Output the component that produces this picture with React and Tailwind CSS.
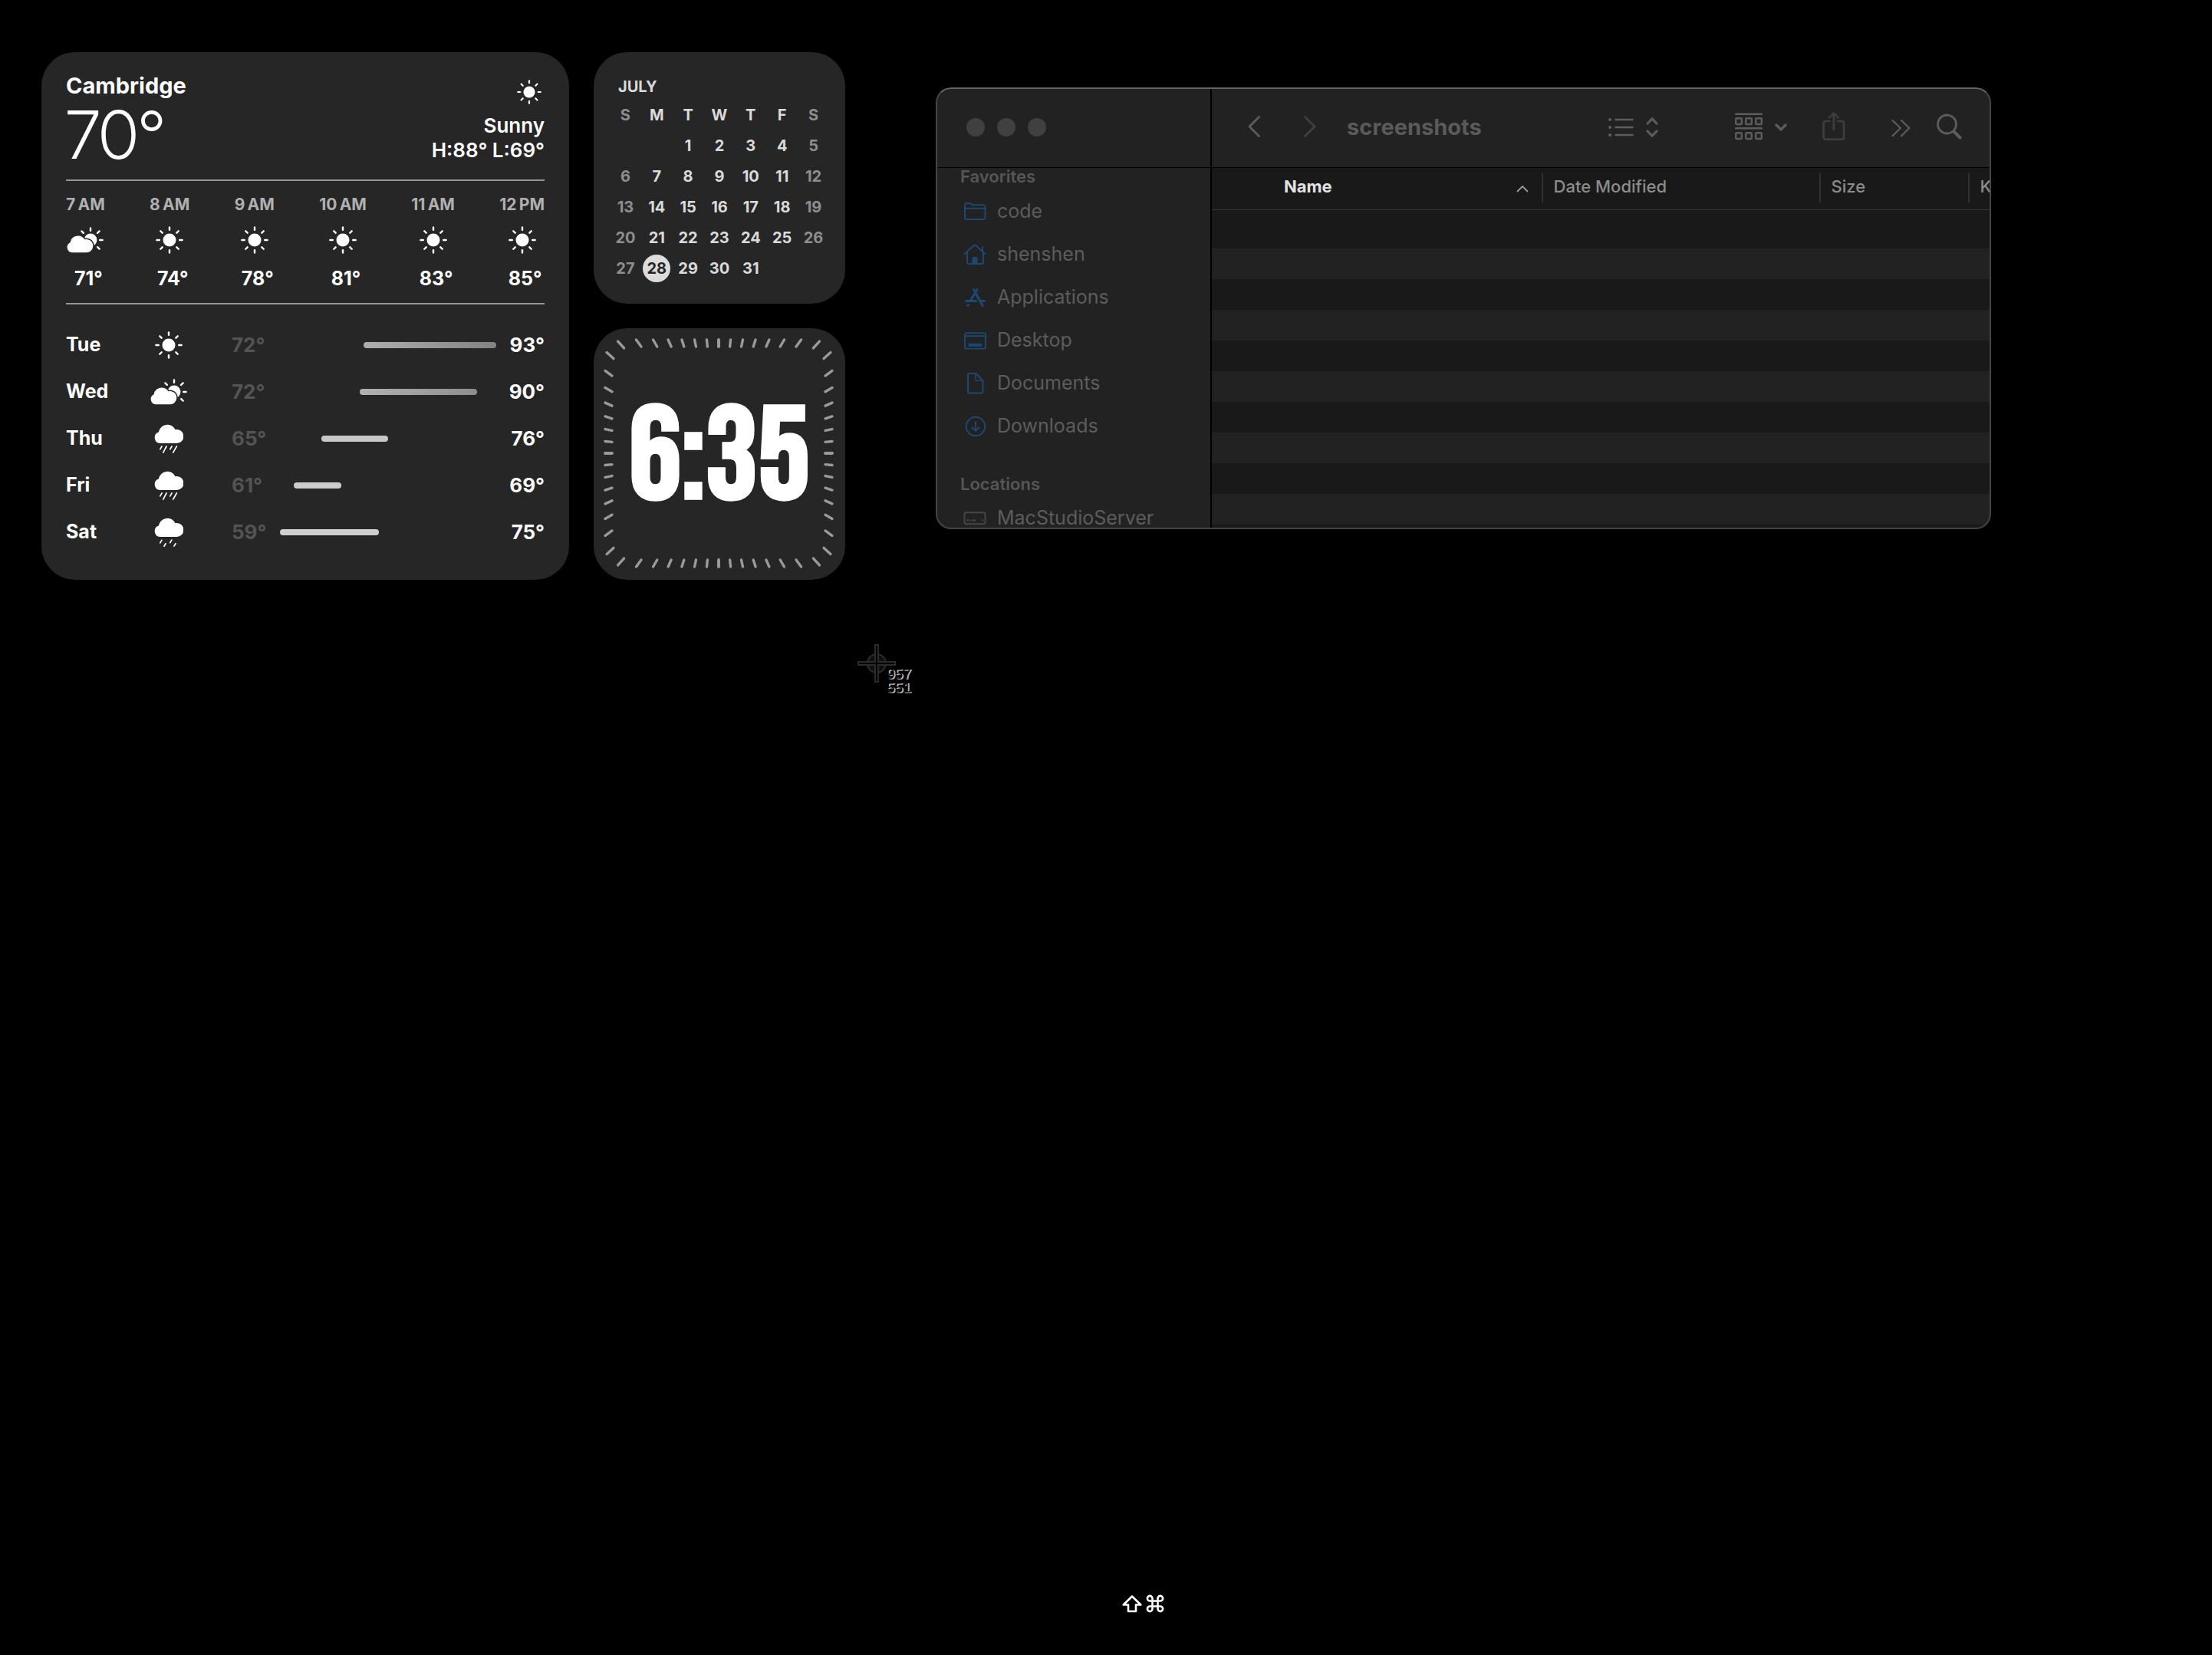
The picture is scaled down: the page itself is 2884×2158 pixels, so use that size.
import React from "react";

/* ---------- weather glyphs ---------- */

function SunIcon({ className = "size-9" }) {
  const rays = [0, 45, 90, 135, 180, 225, 270, 315];
  return (
    <svg viewBox="0 0 36 36" className={className} fill="white" stroke="white" aria-hidden="true">
      <circle cx="18" cy="18" r="8.5" stroke="none" />
      {rays.map((a) => (
        <line key={a} x1="18" y1="1.4" x2="18" y2="4.8" strokeWidth="2.4" strokeLinecap="round" transform={`rotate(${a} 18 18)`} />
      ))}
    </svg>
  );
}

function CloudSunIcon() {
  return (
    <svg viewBox="0 0 48 34" className="h-[34px] w-12" aria-hidden="true">
      <circle cx="31" cy="17" r="8.4" fill="white" />
      <g stroke="white" strokeWidth="2.4" strokeLinecap="round">
        <path d="M31 1.4v3.4M42.6 5.4l-2.6 2.6M46.6 17h-3.4M42.6 28.6l-2.4-2.4M19.4 5.4l2.4 2.4" />
      </g>
      <path
        d="M7 33.3A6.9 6.9 0 0 1 4.6 20.2A10.3 10.3 0 0 1 23.4 16.2A8.7 8.7 0 1 1 25 33.3Z"
        fill="white"
        stroke="#262626"
        strokeWidth="3"
        paintOrder="stroke"
      />
    </svg>
  );
}

function RainIcon({ light = false }) {
  return (
    <svg viewBox="0 0 38 38" className="size-[38px]" aria-hidden="true">
      <path d="M7.6 25A7.4 7.4 0 0 1 5.8 10.6A11.6 11.6 0 0 1 27.6 7.2A9 9 0 1 1 29 25Z" fill="white" />
      <g stroke="white" strokeWidth="1.7" strokeLinecap="round">
        {light ? (
          <path d="M9.8 29.3l-2 3.6M15 33.8l-2 3.4M22.8 29.1l-2 3.6M28 33.8l-2 3.2" />
        ) : (
          <path d="M10 29l-2.2 3.9M16 29l-4.2 8.1M23 29l-2.2 3.9M29.3 29l-4.6 8.1" />
        )}
      </g>
    </svg>
  );
}

/* ---------- weather widget ---------- */

const hours = [
  { time: "7\u2009AM", icon: <CloudSunIcon />, temp: "71°" },
  { time: "8\u2009AM", icon: <SunIcon />, temp: "74°" },
  { time: "9\u2009AM", icon: <SunIcon />, temp: "78°" },
  { time: "10\u2009AM", icon: <SunIcon />, temp: "81°" },
  { time: "11\u2009AM", icon: <SunIcon />, temp: "83°" },
  { time: "12\u2009PM", icon: <SunIcon />, temp: "85°" },
];

const days = [
  { day: "Tue", icon: <SunIcon />, low: "72°", high: "93°", start: 38.7, span: 61.3, tone: "bg-linear-to-r from-[#aeaeac] to-[#828282]" },
  { day: "Wed", icon: <CloudSunIcon />, low: "72°", high: "90°", start: 36.9, span: 54.3, tone: "bg-linear-to-r from-[#b2b2b2] to-[#8e8e8e]" },
  { day: "Thu", icon: <RainIcon />, low: "65°", high: "76°", start: 19.1, span: 30.9, tone: "bg-[#c8c8c8]" },
  { day: "Fri", icon: <RainIcon />, low: "61°", high: "69°", start: 6.4, span: 22, tone: "bg-[#cccccc]" },
  { day: "Sat", icon: <RainIcon light />, low: "59°", high: "75°", start: 0, span: 45.7, tone: "bg-[#cfcfcf]" },
];

function Weather() {
  return (
    <section className="w-[688px] rounded-[44px] bg-[#262626] px-8 pt-[26px] pb-8 text-white">
      <div className="flex justify-between">
        <div>
          <h2 className="text-[29px] leading-9 font-bold">Cambridge</h2>
          <p className="font-['Inter_Display','Inter',sans-serif] text-[86px] leading-[92px] font-[350]">70°</p>
        </div>
        <div className="flex flex-col items-end pt-2.5 text-[26px] leading-8 font-semibold">
          <SunIcon className="mr-1 mb-3 size-8" />
          <p>Sunny</p>
          <p>H:88° L:69°</p>
        </div>
      </div>
      <ul className="mt-3 flex justify-between border-y-2 border-[#969696] py-4">
        {hours.map((h) => (
          <li key={h.time} className="flex flex-col items-center">
            <span className="text-[21px] leading-[30px] font-bold text-[#b0b0b0]">{h.time}</span>
            <span className="mt-[13px] mb-4 flex h-9 items-center">{h.icon}</span>
            <span className="pl-2 text-[25px] leading-8 font-bold">{h.temp}</span>
          </li>
        ))}
      </ul>
      <ul className="pt-[22px] text-[26px] font-bold">
        {days.map((d) => (
          <li key={d.day} className="grid h-[61px] grid-cols-[109px_50px_57px_63px_1fr_63px] items-center">
            <span className="text-[25px]">{d.day}</span>
            <span className="flex justify-center">{d.icon}</span>
            <span />
            <span className="text-[#545454]">{d.low}</span>
            <span className="flex">
              <span className={`h-2 rounded-full ${d.tone}`} style={{ marginLeft: `${d.start}%`, width: `${d.span}%` }} />
            </span>
            <span className="text-right">{d.high}</span>
          </li>
        ))}
      </ul>
    </section>
  );
}

/* ---------- calendar widget ---------- */

const weekdays = ["S", "M", "T", "W", "T", "F", "S"];
const weeks = [
  ["", "", 1, 2, 3, 4, 5],
  [6, 7, 8, 9, 10, 11, 12],
  [13, 14, 15, 16, 17, 18, 19],
  [20, 21, 22, 23, 24, 25, 26],
  [27, 28, 29, 30, 31, "", ""],
];
const weekend = (i) => (i === 0 || i === 6 ? "text-[#8e8e8e]" : "text-[#dadada]");

function Calendar() {
  return (
    <section className="h-[328px] w-[328px] rounded-[44px] bg-[#262626] px-[21px] pt-7 text-[20px] text-[#dadada]">
      <h2 className="pl-[11px] leading-[34px] font-bold">JULY</h2>
      <table className="w-full table-fixed text-center">
        <thead>
          <tr className="h-10">
            {weekdays.map((d, i) => (
              <th key={i} className={`p-0 font-bold ${weekend(i)}`}>{d}</th>
            ))}
          </tr>
        </thead>
        <tbody>
          {weeks.map((w, r) => (
            <tr key={r} className="h-10">
              {w.map((d, i) => (
                <td key={i} className={`p-0 font-bold ${weekend(i)}`}>
                  {d === 28 ? (
                    <span className="mx-auto flex size-9 items-center justify-center rounded-full bg-[#dcdcdc] text-[#262626]">28</span>
                  ) : (
                    d
                  )}
                </td>
              ))}
            </tr>
          ))}
        </tbody>
      </table>
    </section>
  );
}

/* ---------- clock widget ---------- */

function Ticks() {
  const marks = Array.from({ length: 60 }, (_, i) => {
    const a = (i * Math.PI) / 30;
    const s = Math.sin(a);
    const c = -Math.cos(a);
    const m = Math.max(Math.abs(s), Math.abs(c));
    const corner = m < 0.75 ? 0.986 : 1;
    const inner = (139 / m) * corner;
    const outer = (148 / m) * corner;
    return { i, x1: s * inner, y1: c * inner, x2: s * outer, y2: c * outer, w: i % 15 === 0 ? 4 : 3.4 };
  });
  return (
    <svg viewBox="-163 -163 328 328" className="absolute inset-0 size-full" stroke="#9a9a9a" strokeLinecap="round" aria-hidden="true">
      {marks.map((t) => (
        <line key={t.i} x1={t.x1} y1={t.y1} x2={t.x2} y2={t.y2} strokeWidth={t.w} />
      ))}
    </svg>
  );
}

function Clock() {
  return (
    <section className="relative flex h-[328px] w-[328px] items-center justify-center rounded-[44px] bg-[#262626] text-white">
      <Ticks />
      <time className="pt-3 font-['Bebas_Neue','Oswald','Roboto_Condensed','Roboto',sans-serif] text-[170px] leading-none font-bold">6:35</time>
    </section>
  );
}

/* ---------- Finder window ---------- */

const sideSvg = "size-[30px] shrink-0 fill-none stroke-current";

const favorites = [
  {
    name: "code",
    icon: (
      <svg viewBox="0 0 30 30" className={sideSvg} strokeWidth="2" strokeLinejoin="round" aria-hidden="true">
        <path d="M2 6.5A2.5 2.5 0 0 1 4.5 4H8.5C10 4 10.5 6.2 12 6.2H26A2.5 2.5 0 0 1 28.5 8.7V22.5A2.5 2.5 0 0 1 26 25H4.5A2.5 2.5 0 0 1 2 22.5ZM2 10.8H28.5" />
      </svg>
    ),
  },
  {
    name: "shenshen",
    icon: (
      <svg viewBox="0 0 30 30" className={sideSvg} strokeWidth="2" strokeLinejoin="round" strokeLinecap="round" aria-hidden="true">
        <path d="M1.5 14L13.5 3.3A2.2 2.2 0 0 1 16.5 3.3L28.5 14M5 12V25A2 2 0 0 0 7 27H24A2 2 0 0 0 26 25V12M25 10V5" />
        <path d="M12 27V19.5A1 1 0 0 1 13 18.5H17A1 1 0 0 1 18 19.5V27Z" fill="currentColor" strokeWidth="1" />
      </svg>
    ),
  },
  {
    name: "Applications",
    icon: (
      <svg viewBox="0 0 30 30" className={sideSvg} strokeWidth="3" strokeLinecap="round" aria-hidden="true">
        <path d="M18 4.5L9.5 18.5M13.5 4.5L25 25.5M3.5 19.5H16.5M23 19.5H27.5M6.5 24.5L5.8 25.5" />
      </svg>
    ),
  },
  {
    name: "Desktop",
    icon: (
      <svg viewBox="0 0 31 30" className={sideSvg} strokeWidth="2" aria-hidden="true">
        <rect x="2" y="5" width="28" height="21" rx="2.5" />
        <path d="M2 9H30" />
        <rect x="7" y="19" width="18" height="4" rx="0.5" fill="currentColor" stroke="none" />
      </svg>
    ),
  },
  {
    name: "Documents",
    icon: (
      <svg viewBox="0 0 30 30" className={sideSvg} strokeWidth="2" strokeLinejoin="round" aria-hidden="true">
        <path d="M8 2H16.5L25.5 11.5V25.5A2 2 0 0 1 23.5 27.5H8A2 2 0 0 1 6 25.5V4A2 2 0 0 1 8 2Z" />
        <path d="M15.8 2V10A1.5 1.5 0 0 0 17.3 11.5H25.5" strokeWidth="1.5" />
      </svg>
    ),
  },
  {
    name: "Downloads",
    icon: (
      <svg viewBox="0 0 30 30" className={sideSvg} strokeWidth="2" strokeLinecap="round" strokeLinejoin="round" aria-hidden="true">
        <circle cx="16" cy="15" r="12.2" />
        <path d="M16 9.5V20.5M11.5 16.5L16 20.8L20.5 16.5" />
      </svg>
    ),
  },
];

function SidebarLink({ icon, name, muted }) {
  return (
    <li>
      <a href="#" className="flex h-14 items-center gap-3.5 pl-9">
        <span className={muted ? "text-[#474747]" : "text-[#1d4873]"}>{icon}</span>
        <span className="text-[25px] text-[#5c5c5c]">{name}</span>
      </a>
    </li>
  );
}

function Sidebar() {
  return (
    <aside className="flex w-[360px] shrink-0 flex-col border-r-2 border-black bg-[#222222]">
      <div className="flex h-[105px] shrink-0 items-center gap-4 border-b border-black pl-10">
        {["Close", "Minimize", "Zoom"].map((n) => (
          <button key={n} type="button" aria-label={n} className="size-6 rounded-full bg-[#404040]" />
        ))}
      </div>
      <nav className="min-h-0 flex-1 overflow-hidden">
        <h3 className="h-[29px] pl-8 text-[22px] leading-[22px] font-semibold text-[#565656]">Favorites</h3>
        <ul>
          {favorites.map((f) => (
            <SidebarLink key={f.name} {...f} />
          ))}
        </ul>
        <h3 className="pt-9 pb-1.5 pl-8 text-[22px] leading-[22px] font-semibold text-[#565656]">Locations</h3>
        <ul>
          <SidebarLink
            name="MacStudioServer"
            muted
            icon={
              <svg viewBox="0 0 31 30" className={sideSvg} strokeWidth="2" aria-hidden="true">
                <rect x="1.5" y="7" width="28" height="15.5" rx="2.5" />
                <path d="M5.5 16V18.5M8.5 16V18.5M11 17.5H17M24.5 17.5H27" />
              </svg>
            }
          />
        </ul>
      </nav>
    </aside>
  );
}

function ToolButton({ label, width, className = "", children }) {
  return (
    <button type="button" aria-label={label} className={`shrink-0 text-[#5c5c5c] ${className}`}>
      <svg width={width} height="40" viewBox={`0 0 ${width} 40`} fill="none" stroke="currentColor" strokeLinecap="round" strokeLinejoin="round" aria-hidden="true">
        {children}
      </svg>
    </button>
  );
}

function Toolbar() {
  return (
    <header className="flex h-[105px] shrink-0 items-center border-b border-black bg-[#222222] pr-[38px] pl-[47px]">
      <ToolButton label="Back" width={16}>
        <path d="M14.5 6.5L2 19L14.5 31.5" strokeWidth="2.8" />
      </ToolButton>
      <ToolButton label="Forward" width={16} className="ml-[57px] text-[#404040]!">
        <path d="M1.5 6.5L14 19L1.5 31.5" strokeWidth="2.8" />
      </ToolButton>
      <h1 className="ml-10 text-[29px] leading-10 font-bold text-[#5a5a5a]">screenshots</h1>

      <ToolButton label="View as list" width={33} className="ml-auto">
        <path d="M9.5 10H31.5M9.5 20H31.5M9.5 30H31.5" strokeWidth="2.6" />
        <path d="M2 10H2.1M2 20H2.1M2 30H2.1" strokeWidth="4" />
      </ToolButton>
      <ToolButton label="Change view" width={16} className="ml-4">
        <path d="M2 15L8 8.8L14 15M2 25L8 31.2L14 25" strokeWidth="3.2" />
      </ToolButton>
      <ToolButton label="Group items" width={36} className="ml-[100px]">
        <path d="M1.2 2.7H34.8M1.2 21.3H34.8" strokeWidth="2.6" />
        {[1.2, 14.2, 27.2].map((x) => (
          <React.Fragment key={x}>
            <rect x={x} y="8.2" width="7.6" height="7.8" rx="1" strokeWidth="2.4" />
            <rect x={x} y="27.2" width="7.6" height="7.8" rx="1" strokeWidth="2.4" />
          </React.Fragment>
        ))}
      </ToolButton>
      <ToolButton label="Group options" width={16} className="ml-4">
        <path d="M2 17L8 23L14 17" strokeWidth="3.4" />
      </ToolButton>
      <ToolButton label="Share" width={30} className="ml-[46px] text-[#3e3e3e]!">
        <path d="M9.5 12H4.2A2.7 2.7 0 0 0 1.5 14.7V33A2.7 2.7 0 0 0 4.2 35.7H25.3A2.7 2.7 0 0 0 28 33V14.7A2.7 2.7 0 0 0 25.3 12H20M14.8 2V23M9 7.2L14.8 1.5L20.6 7.2" strokeWidth="2.6" />
      </ToolButton>
      <ToolButton label="More" width={25} className="ml-[60px]">
        <path d="M1.5 11L11.8 21L1.5 31.2M13 11L23.3 21L13 31.2" strokeWidth="2.3" />
      </ToolButton>
      <ToolButton label="Search" width={33} className="ml-[34px]">
        <circle cx="13.5" cy="16" r="12" strokeWidth="2.8" />
        <path d="M22.5 25.5L30.5 33.5" strokeWidth="4" />
      </ToolButton>
    </header>
  );
}

const cellRule =
  "relative p-0 pb-1 pl-4 text-left font-medium text-[#8c8c8c] before:absolute before:top-[7px] before:left-0 before:h-[38px] before:w-0.5 before:bg-[#303030]";

function FileList() {
  return (
    <table className="w-full table-fixed border-collapse text-[22px] whitespace-nowrap">
      <colgroup>
        <col />
        <col className="w-[362px]" />
        <col className="w-[194px]" />
        <col className="w-[30px]" />
      </colgroup>
      <thead>
        <tr className="h-[54px] border-b border-[#363636]">
          <th className="p-0 pr-[17px] pb-1 pl-[94px] font-bold text-[#e2e2e2]">
            <button type="button" className="flex w-full items-center justify-between">
              Name
              <svg viewBox="0 0 16 10" className="mt-1 h-2.5 w-4" fill="none" stroke="#9a9a9a" strokeWidth="1.8" strokeLinecap="round" strokeLinejoin="round" aria-hidden="true">
                <path d="M1.5 8.5L8 2L14.5 8.5" />
              </svg>
            </button>
          </th>
          <th className={cellRule}>Date Modified</th>
          <th className={cellRule}>Size</th>
          <th className={cellRule}>Kind</th>
        </tr>
      </thead>
      <tbody>
        {Array.from({ length: 11 }, (_, i) => (
          <tr key={i} className="h-10 bg-[#191919] first:h-[51px] even:bg-[#222222]">
            <td colSpan={4} />
          </tr>
        ))}
      </tbody>
    </table>
  );
}

function Finder() {
  return (
    <section className="relative mt-[46px] ml-[118px] flex h-[576px] min-w-0 flex-1 overflow-hidden rounded-[20px] bg-[#191919]">
      <Sidebar />
      <div className="flex min-w-0 flex-1 flex-col overflow-hidden">
        <Toolbar />
        <FileList />
      </div>
      <div className="pointer-events-none absolute inset-0 rounded-[20px] border-2 border-[#454545] border-t-[#666666]" />
    </section>
  );
}

/* ---------- capture pointer ---------- */

function Crosshair() {
  return (
    <div className="absolute top-[840px] left-[1118px]">
      <svg viewBox="0 0 50 50" className="size-[50px]" fill="none" stroke="#2c2c2c" aria-hidden="true">
        <circle cx="25" cy="25" r="12" fill="#0f0f0f" strokeWidth="2" />
        <path d="M23 1H27V23H49V27H27V49H23V27H1V23H23Z" fill="#000000" strokeWidth="2" />
      </svg>
      <p className="absolute top-[30px] left-[38px] font-['Liberation_Sans',Arial,sans-serif] text-[19px] leading-[18px] text-black [text-shadow:1px_1px_0_#bdbdbd,2px_1px_0_#a0a0a0]">
        957
        <br />
        551
      </p>
    </div>
  );
}

function KeyHint() {
  return (
    <footer className="mt-auto flex justify-center gap-[5px] pb-[55px] pl-24">
      <svg viewBox="0 0 26 24" className="h-6 w-[26px]" fill="none" stroke="white" strokeWidth="2.6" strokeLinejoin="round" role="img" aria-label="Shift">
        <path d="M13 2.5L24.3 13.5H18V22H8V13.5H1.7Z" />
      </svg>
      <svg viewBox="0 0 24 24" className="size-6" fill="none" stroke="white" strokeWidth="2.6" role="img" aria-label="Command">
        <path d="M8.5 8.5H15.5V15.5H8.5ZM8.5 8.5H5.2A3.3 3.3 0 1 1 8.5 5.2ZM15.5 8.5V5.2A3.3 3.3 0 1 1 18.8 8.5ZM15.5 15.5H18.8A3.3 3.3 0 1 1 15.5 18.8ZM8.5 15.5V18.8A3.3 3.3 0 1 1 5.2 15.5Z" />
      </svg>
    </footer>
  );
}

export default function App() {
  return (
    <div className="relative flex min-h-screen flex-col bg-black font-['Inter','Liberation_Sans',sans-serif]">
      <main className="flex items-start pt-[68px] pr-[10%] pl-[54px]">
        <Weather />
        <div className="ml-8 flex flex-col gap-8">
          <Calendar />
          <Clock />
        </div>
        <Finder />
      </main>
      <Crosshair />
      <KeyHint />
    </div>
  );
}
